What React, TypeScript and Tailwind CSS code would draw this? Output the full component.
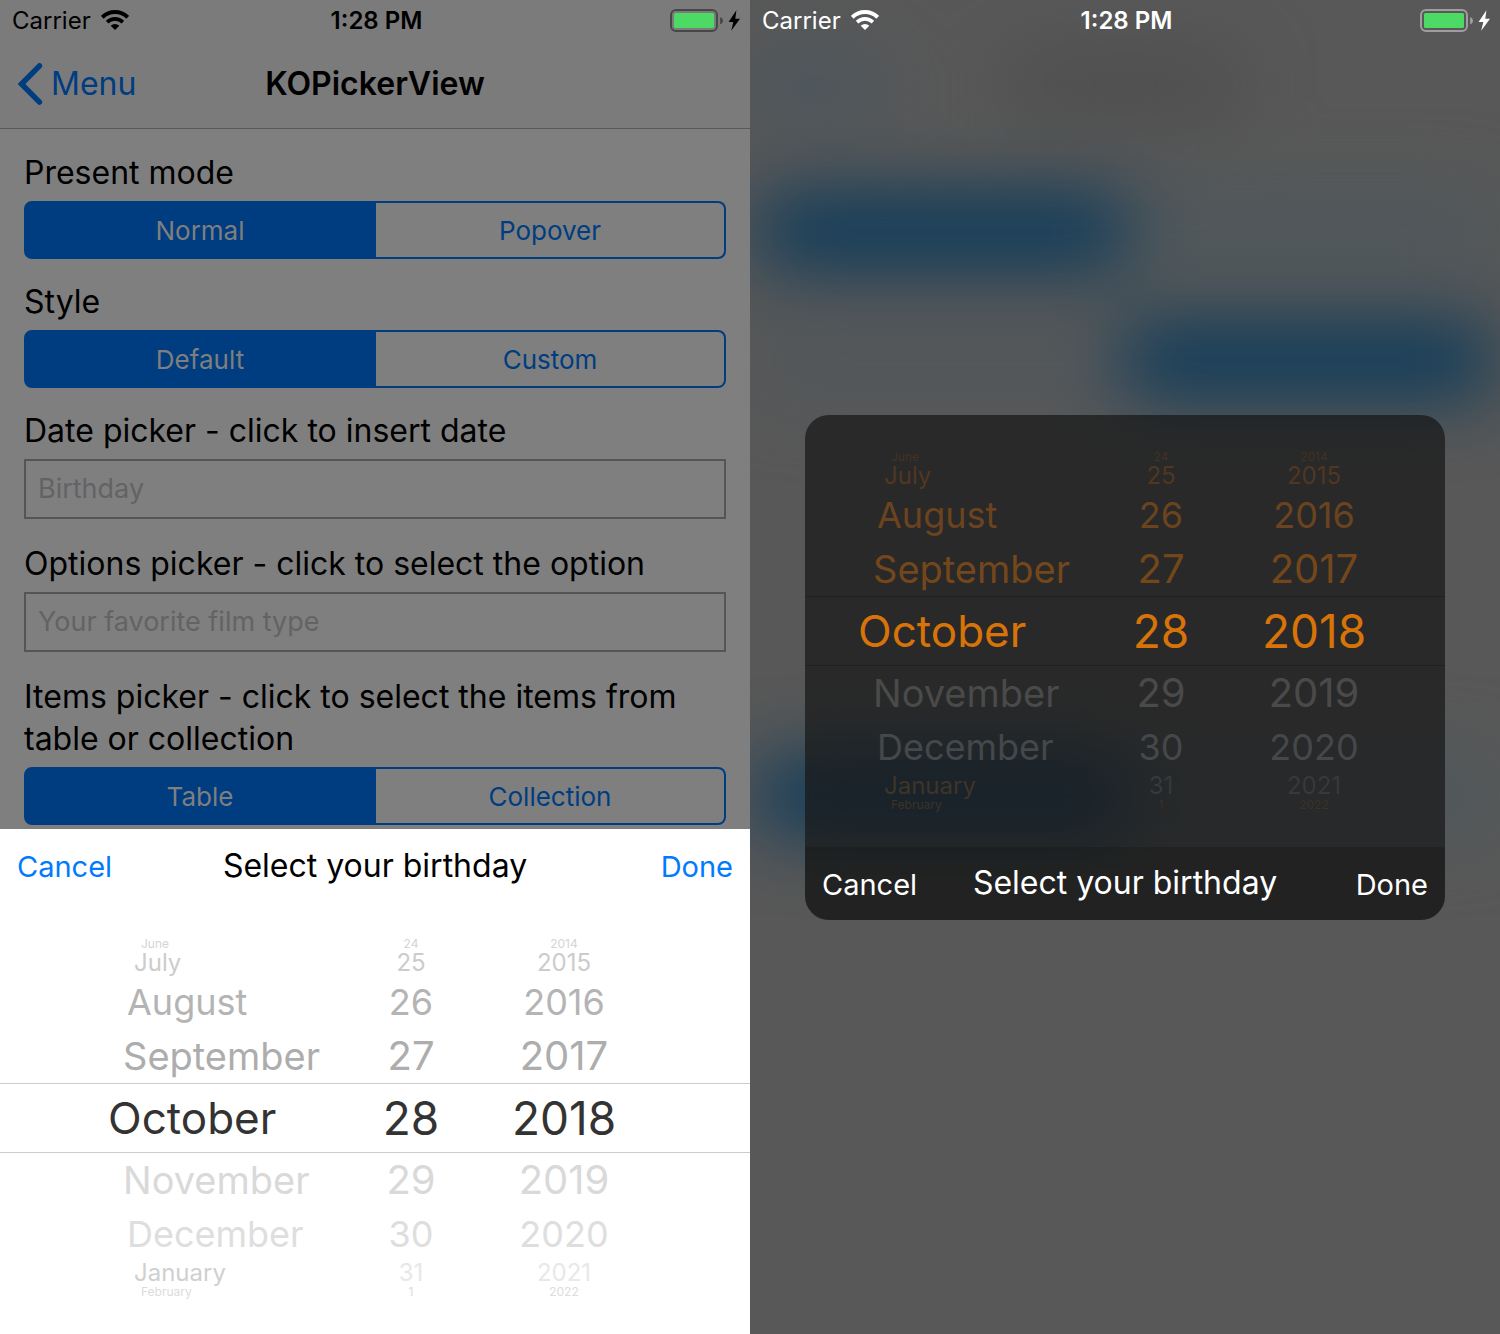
import React from "react";

type Theme = "light" | "dark";

type WheelRow = {
  values: [string, string, string];
  height: string;
  indent: string;
  month: string;
  digits: string;
  light: string;
  dark: string;
  monthLight?: string;
  monthDark?: string;
};

const rows: WheelRow[] = [
  {
    values: ["June", "24", "2014"],
    height: "h-[14px]",
    indent: "pl-[86px]",
    month: "text-[12px] leading-[14px]",
    digits: "text-[12px] leading-[14px]",
    light: "text-[#d4d4d4]",
    dark: "text-[#43321f]",
  },
  {
    values: ["July", "25", "2015"],
    height: "h-[24px]",
    indent: "pl-[79px]",
    month: "text-[24px] leading-[24px]",
    digits: "text-[24px] leading-[24px]",
    light: "text-[#cccccc]",
    dark: "text-[#503722]",
  },
  {
    values: ["August", "26", "2016"],
    height: "h-[54px]",
    indent: "pl-[72px]",
    month: "text-[36px] leading-[54px]",
    digits: "text-[36px] leading-[54px]",
    light: "text-[#b4b4b4]",
    dark: "text-[#6b431e]",
  },
  {
    values: ["September", "27", "2017"],
    height: "h-[54px]",
    indent: "pl-[68px]",
    month: "text-[38px] leading-[54px]",
    digits: "text-[40px] leading-[54px]",
    light: "text-[#adadad]",
    dark: "text-[#74471b]",
  },
  {
    values: ["October", "28", "2018"],
    height: "h-[70px] border-y",
    indent: "pl-[53px]",
    month: "text-[44px] leading-[68px]",
    digits: "text-[46px] leading-[68px]",
    light: "text-[#333333] border-[#cccccc]",
    dark: "text-[#d8730a] border-[#1f1f1f]",
  },
  {
    values: ["November", "29", "2019"],
    height: "h-[54px]",
    indent: "pl-[68px]",
    month: "text-[38px] leading-[54px]",
    digits: "text-[40px] leading-[54px]",
    light: "text-[#d9d9d9]",
    dark: "text-[#4a4a4a]",
  },
  {
    values: ["December", "30", "2020"],
    height: "h-[54px]",
    indent: "pl-[72px]",
    month: "text-[36px] leading-[54px]",
    digits: "text-[36px] leading-[54px]",
    light: "text-[#dedede]",
    dark: "text-[#45484a]",
  },
  {
    values: ["January", "31", "2021"],
    height: "h-[24px]",
    indent: "pl-[79px]",
    month: "text-[24px] leading-[24px]",
    digits: "text-[24px] leading-[24px]",
    light: "text-[#e8e8e8]",
    dark: "text-[#37393a]",
    monthLight: "text-[#d0d0d0]",
    monthDark: "text-[#3f3428]",
  },
  {
    values: ["February", "1", "2022"],
    height: "h-[14px]",
    indent: "pl-[86px]",
    month: "text-[12px] leading-[14px]",
    digits: "text-[12px] leading-[14px]",
    light: "text-[#dcdcdc]",
    dark: "text-[#3d3226]",
  },
];

function DateWheel({ theme }: { theme: Theme }) {
  return (
    <div
      role="group"
      aria-label="Birthday date"
      className="flex h-[432px] flex-col justify-center"
    >
      {rows.map((row) => (
        <div
          key={row.values[0]}
          className={`flex items-center justify-center ${row.height} ${theme === "light" ? row.light : row.dark}`}
        >
          <div className="flex w-full max-w-[640px] pr-[28px]">
            <button
              type="button"
              className={`flex-1 text-left ${row.indent} ${row.month} ${(theme === "light" ? row.monthLight : row.monthDark) ?? ""}`}
            >
              {row.values[0]}
            </button>
            <button type="button" className={`w-[100px] text-center ${row.digits}`}>
              {row.values[1]}
            </button>
            <button type="button" className={`w-[206px] text-center ${row.digits}`}>
              {row.values[2]}
            </button>
          </div>
        </div>
      ))}
    </div>
  );
}

function PickerBar({ theme }: { theme: Theme }) {
  const action = theme === "light" ? "text-[#007aff]" : "text-white";
  const title = theme === "light" ? "text-black" : "text-white";
  const back = theme === "light" ? "" : "bg-black/15";
  return (
    <div className={`flex h-[73px] items-center justify-between px-[17px] ${back}`}>
      <button type="button" className={`flex-1 pt-[3px] text-left text-[29px] leading-[40px] ${action}`}>
        Cancel
      </button>
      <h2 className={`text-[32px] leading-[40px] ${title}`}>Select your birthday</h2>
      <button type="button" className={`flex-1 pt-[3px] text-right text-[29px] leading-[40px] ${action}`}>
        Done
      </button>
    </div>
  );
}

function StatusBar({ theme }: { theme: Theme }) {
  return (
    <div
      className={`flex h-[40px] items-center justify-between pr-[9px] pl-[12px] ${theme === "light" ? "text-black" : "text-white"}`}
    >
      <div className="flex flex-1 items-center gap-[10px]">
        <span className="pt-[2px] text-[24px] leading-[38px]">Carrier</span>
        <svg width="28" height="20" viewBox="0 0 28 20" fill="none" stroke="currentColor" aria-label="Wi-Fi">
          <path d="M1.3 7.3A18 18 0 0 1 26.7 7.3" strokeWidth="4" />
          <path d="M6.1 12.1A11.2 11.2 0 0 1 21.9 12.1" strokeWidth="3.6" />
          <path d="M14 20L9.7 15.8A6.1 6.1 0 0 1 18.3 15.8Z" fill="currentColor" stroke="none" />
        </svg>
      </div>
      <span className="pt-[2px] text-[24px] leading-[38px] font-semibold">1:28 PM</span>
      <div className="flex flex-1 justify-end">
        <svg width="71" height="24" viewBox="0 0 71 24" aria-label="Battery charging">
          <rect x="1" y="2" width="46" height="21" rx="5" fill="none" stroke="currentColor" strokeOpacity=".42" strokeWidth="2" />
          <rect x="4" y="5" width="40" height="15" rx="1.5" fill="#4cd964" />
          <path d="M50.2 9Q53 10 53 12.7T50.2 16.6Z" fill="currentColor" fillOpacity=".45" />
          <path d="M66.4 2.2L58.6 13.9H63.3L61.2 22.8L70 10.7H65.3Z" fill="currentColor" />
        </svg>
      </div>
    </div>
  );
}

function Segments({
  id,
  label,
  options,
  gap,
}: {
  id: string;
  label: string;
  options: [string, string];
  gap: string;
}) {
  return (
    <div className={gap}>
      <p id={id} className="text-[32px] leading-[42px] text-black">
        {label}
      </p>
      <div role="group" aria-labelledby={id} className="mt-[7px] flex h-[58px] text-[26px]">
        <button
          type="button"
          aria-pressed="true"
          className="flex-1 rounded-l-lg border-2 border-[#003d80] bg-[#003d80] text-[#7f7f7f]"
        >
          {options[0]}
        </button>
        <button
          type="button"
          aria-pressed="false"
          className="flex-1 rounded-r-lg border-2 border-l-0 border-[#003d80] text-[#003d80]"
        >
          {options[1]}
        </button>
      </div>
    </div>
  );
}

function Field({ id, label, placeholder }: { id: string; label: string; placeholder: string }) {
  return (
    <div className="mb-[24px]">
      <label htmlFor={id} className="block text-[32px] leading-[42px] text-black">
        {label}
      </label>
      <input
        id={id}
        type="text"
        placeholder={placeholder}
        className="mt-[7px] block h-[60px] w-full border-2 border-[#555555] bg-transparent px-[12px] pb-[2px] text-[27px] text-black outline-none placeholder:text-[#636365]"
      />
    </div>
  );
}

function SheetScreen() {
  return (
    <section className="flex min-h-screen flex-1 flex-col bg-[#7f7f7f]">
      <div className="border-b border-[#595959] bg-[#7b7b7b]">
        <StatusBar theme="light" />
        <header className="flex h-[88px] items-center px-[17px]">
          <a href="#menu" className="flex flex-1 items-center gap-[8px] text-[#003d80]">
            <svg width="26" height="42" viewBox="0 0 26 42" fill="none" stroke="currentColor" aria-hidden="true">
              <path d="M22.5 2.8L4.5 21L22.5 39.2" strokeWidth="5.4" strokeLinecap="round" />
            </svg>
            <span className="text-[32px] leading-[42px]">Menu</span>
          </a>
          <h1 className="text-[32px] leading-[42px] font-semibold text-black">KOPickerView</h1>
          <div className="flex-1" />
        </header>
      </div>
      <main className="flex-1 px-[24px] pt-[23px] pb-[3px]">
        <Segments id="present-mode" label="Present mode" options={["Normal", "Popover"]} gap="mb-[22px]" />
        <Segments id="style" label="Style" options={["Default", "Custom"]} gap="mb-[22px]" />
        <Field id="birthday" label="Date picker - click to insert date" placeholder="Birthday" />
        <Field
          id="film-type"
          label="Options picker - click to select the option"
          placeholder="Your favorite film type"
        />
        <Segments
          id="items"
          label="Items picker - click to select the items from table or collection"
          options={["Table", "Collection"]}
          gap=""
        />
      </main>
      <div className="bg-white">
        <PickerBar theme="light" />
        <DateWheel theme="light" />
      </div>
    </section>
  );
}

function BlurredForm() {
  return (
    <div aria-hidden="true" className="absolute inset-0 overflow-hidden bg-[#585858]">
      <div className="blur-[38px]">
        <div className="flex h-[198px] items-start justify-between pt-[60px]">
          <div className="h-[60px] w-[130px] bg-[#4a575f]" />
          <div className="h-[50px] w-[220px] bg-[#4a4a4a]" />
          <div className="w-[130px]" />
        </div>
        <div className="flex h-[129px] px-[10px]">
          <div className="h-[66px] flex-1 bg-[#00355a]" />
          <div className="h-[66px] flex-1 bg-[#4d585c]" />
        </div>
        <div className="flex h-[436px] px-[10px]">
          <div className="h-[66px] flex-1 bg-[#51575b]" />
          <div className="h-[66px] flex-1 bg-[#00355a]" />
        </div>
        <div className="flex px-[10px]">
          <div className="h-[66px] flex-1 bg-[#00355a]" />
          <div className="h-[66px] flex-1 bg-[#4d585c]" />
        </div>
      </div>
    </div>
  );
}

function PopoverScreen() {
  return (
    <section className="relative min-h-screen flex-1">
      <BlurredForm />
      <div className="relative flex min-h-screen flex-col">
        <StatusBar theme="dark" />
        <div className="flex flex-1 items-center justify-center px-[55px] pb-[40px]">
          <div className="w-full max-w-[640px] overflow-hidden rounded-[24px] bg-[#181818]/72">
            <DateWheel theme="dark" />
            <PickerBar theme="dark" />
          </div>
        </div>
      </div>
    </section>
  );
}

export default function App() {
  return (
    <div className="flex min-h-screen font-['Inter','Liberation_Sans',sans-serif]">
      <SheetScreen />
      <PopoverScreen />
    </div>
  );
}
